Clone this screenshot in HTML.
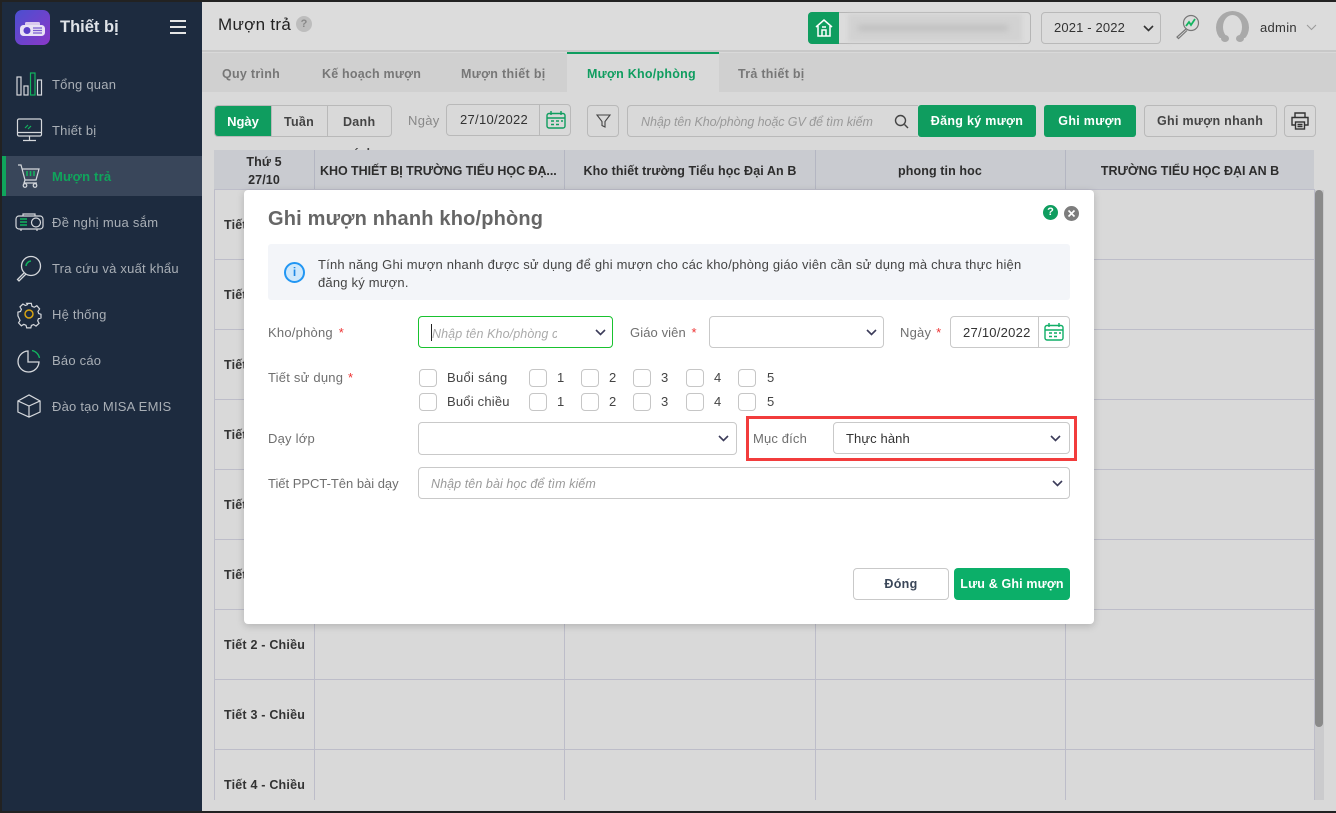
<!DOCTYPE html>
<html lang="vi"><head><meta charset="utf-8"><title>Mượn trả</title>
<style>
*{box-sizing:border-box}
html,body{margin:0;padding:0}
body{width:1336px;height:813px;overflow:hidden;position:relative;background:#d9d9d9;font-family:"Liberation Sans","DejaVu Sans",sans-serif;font-size:13px;color:#333}
.a{position:absolute}
.t{position:absolute;white-space:nowrap;line-height:20px;letter-spacing:.3px;margin-top:1px}
.n{margin-top:0}
.box{position:absolute;border:1px solid #b9b9b9;border-radius:4px}
.inp{position:absolute;border:1px solid #c9c9c9;border-radius:4px;background:#fff;height:32px}
.cb{position:absolute;width:18px;height:18px;border:1px solid #c6c6c6;border-radius:4px;background:#fff}
.g{position:absolute;background:#0f9d5f;color:#fff;border-radius:3px;text-align:center;font-weight:bold;letter-spacing:.3px;height:32px;line-height:32px}
.m{color:#a9afb6;left:52px;letter-spacing:.22px}
.lab{color:#6f6f6f;letter-spacing:.22px}
.st{color:#e33;margin-left:1px}
.hl{position:absolute;left:214px;width:1101px;height:1px;background:#bdbdc9}
.vl{position:absolute;top:189px;height:611px;width:1px;background:#bdbdc9}
.th{position:absolute;top:161px;text-align:center;font-weight:bold;color:#2d2d2d;line-height:20px;white-space:nowrap;font-size:12.5px;letter-spacing:.1px}
.rw{position:absolute;left:224px;font-weight:bold;color:#333;line-height:20px;white-space:nowrap;font-size:12.5px;letter-spacing:.2px}
.tb{font-weight:bold;color:#777;font-size:12.5px;letter-spacing:.28px}
.ck{color:#444}
svg{position:absolute;overflow:visible}
</style></head><body>

<!-- main header -->
<div class="a" style="left:202px;top:0;width:1134px;height:52px;background:#dcdcdc;border-bottom:2px solid #c8c8c8"></div>
<div class="t n" style="left:218px;top:14px;font-size:17px;line-height:22px;color:#222;letter-spacing:.3px">Mượn trả</div>
<div class="a" style="left:296px;top:16px;width:16px;height:16px;border-radius:50%;background:#bdbdbd;color:#888;text-align:center;font-size:11px;line-height:16px;font-weight:bold">?</div>

<div class="box" style="left:808px;top:12px;width:223px;height:32px;border-color:#b5b5b5"></div>
<div class="a" style="left:808px;top:12px;width:31px;height:32px;background:#0f9d5f;border-radius:4px 0 0 4px"></div>
<svg style="left:815px;top:18px" width="18" height="20" viewBox="0 0 18 20" fill="none" stroke="#fff" stroke-width="1.5"><path d="M1 9 9 2l8 7M3 8v10h12V8M7 18v-6h4v6M7 9h4"/></svg>
<div class="a" style="left:848px;top:14px;width:174px;height:28px;background:#d2d2d2;filter:blur(2px)"></div>
<div class="a" style="left:858px;top:25px;width:150px;height:6px;background:#c0c0c0;filter:blur(3px)"></div>

<div class="box" style="left:1041px;top:12px;width:120px;height:32px"></div>
<div class="t n" style="left:1054px;top:18px;color:#333;letter-spacing:.15px">2021 - 2022</div>
<svg style="left:1143px;top:25px" width="11" height="7" viewBox="0 0 11 7" fill="none" stroke="#333" stroke-width="1.6"><path d="M1 1l4.5 4.5L10 1"/></svg>
<svg style="left:1174px;top:14px" width="26" height="26" viewBox="0 0 26 26" fill="none"><circle cx="17" cy="9" r="7.5" stroke="#777" stroke-width="1.2"/><path d="M12 15 3 23l1.500 1.500 8.500-8" stroke="#777" stroke-width="1.2"/><path d="M12 12l3-4 2 3 4-6" stroke="#12b45f" stroke-width="1.8"/></svg>
<div class="a" style="left:1216px;top:11px;width:33px;height:33px;border-radius:50%;background:#a9a9a9"></div>
<div class="a" style="left:1223px;top:15px;width:19px;height:24px;border-radius:50%;background:#dcdcdc"></div>
<div class="a" style="left:1216px;top:38px;width:33px;height:6px;background:#dcdcdc"></div>
<div class="a" style="left:1221px;top:35px;width:8px;height:7px;border-radius:50%;background:#a9a9a9"></div>
<div class="a" style="left:1236px;top:35px;width:8px;height:7px;border-radius:50%;background:#a9a9a9"></div>
<div class="t n" style="left:1260px;top:18px;color:#333">admin</div>
<svg style="left:1306px;top:24px" width="11" height="7" viewBox="0 0 11 7" fill="none" stroke="#999" stroke-width="1"><path d="M1 1l4.500 4.500L10 1"/></svg>

<!-- tabs -->
<div class="a" style="left:202px;top:53px;width:1134px;height:39px;background:#d0d0d0"></div>
<div class="a" style="left:567px;top:52px;width:152px;height:40px;background:#d9d9d9;border-top:2px solid #0f9d5f"></div>
<div class="t tb" style="left:222px;top:63px">Quy trình</div>
<div class="t tb" style="left:322px;top:63px;letter-spacing:.2px">Kế hoạch mượn</div>
<div class="t tb" style="left:461px;top:63px;letter-spacing:.32px">Mượn thiết bị</div>
<div class="t tb" style="left:587px;top:63px;color:#0f9d5f;letter-spacing:.25px">Mượn Kho/phòng</div>
<div class="t tb" style="left:738px;top:63px">Trả thiết bị</div>

<!-- toolbar -->
<div class="box" style="left:214px;top:105px;width:178px;height:32px"></div>
<div class="a" style="left:215px;top:106px;width:56px;height:30px;background:#0f9d5f;border-radius:3px 0 0 3px;color:#fff;font-weight:bold;text-align:center;line-height:31px">Ngày</div>
<div class="a" style="left:327px;top:106px;width:1px;height:30px;background:#b9b9b9"></div>
<div class="a" style="left:271px;top:106px;width:1px;height:30px;background:#b9b9b9"></div>
<div class="t tb" style="left:284px;top:111px;color:#444">Tuần</div>
<div class="t tb" style="left:343px;top:111px;color:#444">Danh</div>
<div class="t" style="left:408px;top:110px;color:#888">Ngày</div>
<div class="box" style="left:446px;top:104px;width:125px;height:32px"></div>
<div class="a" style="left:539px;top:105px;width:1px;height:30px;background:#b9b9b9"></div>
<div class="t n" style="left:460px;top:110px;color:#333">27/10/2022</div>
<svg style="left:546px;top:111px" width="20" height="18" viewBox="0 0 20 18" fill="none" stroke="#0f9d5f" stroke-width="1.400"><rect x="1" y="2.500" width="18" height="14.500" rx="2"/><path d="M1 7h18M5 0v4M15 0v4M5 10h3M10 10h3M15 10h2M5 13.500h3M10 13.500h3"/></svg>
<div class="box" style="left:587px;top:105px;width:32px;height:32px"></div>
<svg style="left:596px;top:114px" width="15" height="15" viewBox="0 0 15 15" fill="none" stroke="#444" stroke-width="1.100"><path d="M1 1h13L9 7.500V13l-3-1.500v-4z"/></svg>
<div class="box" style="left:627px;top:105px;width:291px;height:32px;border-radius:4px 0 0 4px;border-right:0"></div>
<div class="t" style="left:641px;top:111px;color:#999;font-style:italic;font-size:12.500px;letter-spacing:-.08px">Nhập tên Kho/phòng hoặc GV để tìm kiếm</div>
<svg style="left:894px;top:114px" width="15" height="15" viewBox="0 0 15 15" fill="none" stroke="#444" stroke-width="1.400"><circle cx="6.500" cy="6.500" r="5"/><path d="M10.500 10.500 14 14"/></svg>
<div class="g" style="left:918px;top:105px;width:118px;font-size:12.500px">Đăng ký mượn</div>
<div class="g" style="left:1044px;top:105px;width:92px;font-size:12.500px">Ghi mượn</div>
<div class="box" style="left:1144px;top:105px;width:133px;height:32px"></div>
<div class="t tb" style="left:1157px;top:110px;color:#444;letter-spacing:.3px">Ghi mượn nhanh</div>
<div class="box" style="left:1284px;top:105px;width:32px;height:32px"></div>
<svg style="left:1291px;top:112px" width="18" height="18" viewBox="0 0 18 18" fill="none" stroke="#333" stroke-width="1.400"><path d="M4 5V1h10v4M4 13H1V5.500h16V13h-3"/><rect x="4.500" y="10" width="9" height="7"/><path d="M6.500 12.500h5M6.500 14.500h5"/></svg>

<!-- table -->
<div class="t n" style="left:346px;top:145px;height:5px;overflow:hidden;font-weight:bold;font-size:12px;color:#444;letter-spacing:.2px;line-height:16px;">sách</div>
<div class="a" style="left:214px;top:150px;width:1100px;height:39px;background:#c9cbd0"></div>
<div class="a" style="left:214px;top:189px;width:1101px;height:1px;background:#bdbdc9"></div>
<div class="a" style="left:314px;top:150px;width:1px;height:39px;background:#b4b6c2"></div>
<div class="a" style="left:564px;top:150px;width:1px;height:39px;background:#b4b6c2"></div>
<div class="a" style="left:815px;top:150px;width:1px;height:39px;background:#b4b6c2"></div>
<div class="a" style="left:1065px;top:150px;width:1px;height:39px;background:#b4b6c2"></div>
<div class="th" style="left:214px;width:100px;top:153px;line-height:18px;font-size:12.500px">Thứ 5<br>27/10</div>
<div class="th" style="left:320px;letter-spacing:-.05px">KHO THIẾT BỊ TRƯỜNG TIỂU HỌC ĐẠ...</div>
<div class="th" style="left:565px;width:250px">Kho thiết trường Tiểu học Đại An B</div>
<div class="th" style="left:815px;width:250px">phong tin hoc</div>
<div class="th" style="left:1065px;width:250px;letter-spacing:0">TRƯỜNG TIỂU HỌC ĐẠI AN B</div>

<div class="hl" style="top:259px"></div><div class="hl" style="top:329px"></div><div class="hl" style="top:399px"></div><div class="hl" style="top:469px"></div><div class="hl" style="top:539px"></div><div class="hl" style="top:609px"></div><div class="hl" style="top:679px"></div><div class="hl" style="top:749px"></div>
<div class="vl" style="left:214px"></div><div class="vl" style="left:314px"></div><div class="vl" style="left:564px"></div><div class="vl" style="left:815px"></div><div class="vl" style="left:1065px"></div><div class="vl" style="left:1314px"></div>

<div class="rw" style="top:215px">Tiết</div>
<div class="rw" style="top:285px">Tiết</div>
<div class="rw" style="top:355px">Tiết</div>
<div class="rw" style="top:425px">Tiết</div>
<div class="rw" style="top:495px">Tiết</div>
<div class="rw" style="top:565px">Tiết</div>
<div class="rw" style="top:635px">Tiết 2 - Chiều</div>
<div class="rw" style="top:705px">Tiết 3 - Chiều</div>
<div class="rw" style="top:775px">Tiết 4 - Chiều</div>

<div class="a" style="left:1315px;top:190px;width:9px;height:610px;background:#cbcbcd"></div>
<div class="a" style="left:1315px;top:190px;width:8px;height:537px;background:#8a8a8a;border-radius:4px"></div>

<!-- sidebar -->
<div class="a" style="left:0;top:0;width:202px;height:813px;background:#1d2b3f"></div>
<div class="a" style="left:2px;top:156px;width:200px;height:40px;background:#39465a"></div>
<div class="a" style="left:2px;top:156px;width:4px;height:40px;background:#10a55c"></div>
<div class="a" style="left:15px;top:10px;width:35px;height:35px;border-radius:7px;background:linear-gradient(135deg,#4b4fd0,#8a38c8)"></div>
<svg style="left:19px;top:21px" width="27" height="16" viewBox="0 0 27 16"><rect x="6" y="1" width="15" height="4" rx="1.500" fill="#d9c9ee"/><rect x="1" y="4" width="25" height="11" rx="3.500" fill="#e8e2f5"/><circle cx="8" cy="9.500" r="3.500" fill="#5a3fc8"/><path d="M14 7h9M14 9.500h9M14 12h9" stroke="#7a5cd0" stroke-width="1.200"/></svg>
<div class="t n" style="left:60px;top:16px;font-size:16.500px;font-weight:bold;color:#dfe3e8;line-height:22px;letter-spacing:0">Thiết bị</div>
<div class="a" style="left:170px;top:20px;width:16px;height:2px;background:#e5e5e5"></div>
<div class="a" style="left:170px;top:26px;width:16px;height:2px;background:#e5e5e5"></div>
<div class="a" style="left:170px;top:32px;width:16px;height:2px;background:#e5e5e5"></div>

<svg style="left:16px;top:72px" width="27" height="24" viewBox="0 0 27 24" fill="none" stroke="#d5d8dc" stroke-width="1.200"><rect x="1" y="5" width="4" height="18"/><rect x="8" y="14" width="4" height="9"/><rect x="14.500" y="1" width="4.500" height="22" stroke="#12b45f"/><rect x="21.500" y="8" width="4" height="15"/></svg>
<div class="t m" style="top:74px">Tổng quan</div>

<svg style="left:16px;top:118px" width="27" height="24" viewBox="0 0 27 24" fill="none" stroke="#d5d8dc" stroke-width="1.200"><rect x="1.500" y="1" width="24" height="17" rx="1.500"/><path d="M1.500 14.500h24M13.500 18v4M7 22.500h13"/><path d="M9 10l3-3M12 11l3-3" stroke="#12b45f"/></svg>
<div class="t m" style="top:120px">Thiết bị</div>

<svg style="left:17px;top:164px" width="24" height="24" viewBox="0 0 24 24" fill="none" stroke="#d5d8dc" stroke-width="1.200"><path d="M1 1h3l4 15h11l3-11H5M8 16l-1 3h13"/><circle cx="8" cy="21.500" r="1.800"/><circle cx="18" cy="21.500" r="1.800"/><path d="M10 7v5M13.500 7v5M17 7v5" stroke="#12b45f" stroke-width="1.500"/></svg>
<div class="t" style="left:52px;top:166px;color:#10a55c;font-weight:bold;letter-spacing:.2px">Mượn trả</div>

<svg style="left:15px;top:213px" width="29" height="20" viewBox="0 0 29 20" fill="none" stroke="#d5d8dc" stroke-width="1.200"><rect x="1" y="3" width="27" height="13" rx="3"/><path d="M8 3V1h12v2M6 16v2M22 16v2"/><circle cx="21" cy="9.500" r="4.500"/><path d="M5 6h7M5 9h7M5 12h7" stroke="#12b45f" stroke-width="1.600"/></svg>
<div class="t m" style="top:212px;letter-spacing:.3px">Đề nghị mua sắm</div>

<svg style="left:17px;top:255px" width="25" height="27" viewBox="0 0 25 27" fill="none" stroke="#d5d8dc" stroke-width="1.300"><circle cx="14" cy="11" r="9.500"/><path d="M7 18 0.500 24.500 2 26l7-7"/><path d="M9 11a5.500 5.500 0 0 1 5-5" stroke="#12b45f" stroke-width="1.500"/></svg>
<div class="t m" style="top:258px">Tra cứu và xuất khẩu</div>

<svg style="left:17px;top:302px" width="24" height="24" viewBox="0 0 26 26" fill="none" stroke="#d5d8dc" stroke-width="1.300"><path d="M10.500 1.500h5l.7 3.200 2.500 1 2.800-1.700 3 3.500-1.800 2.700.8 2.300 2.500.8v4l-2.800.8-.8 2.300 1.500 2.700-3.300 3-2.600-1.700-2.400 1-.6 2.600h-4.500l-.7-2.800-2.400-1-2.700 1.600-3-3.200 1.600-2.600-1-2.300L1 15v-4l2.800-.7 1-2.400-1.600-2.600 3.200-3.100 2.700 1.600 2.300-1z"/><circle cx="13" cy="13" r="4.300" stroke="#d9a513" stroke-width="1.600"/></svg>
<div class="t m" style="top:304px">Hệ thống</div>

<svg style="left:17px;top:349px" width="24" height="24" viewBox="0 0 24 24" fill="none" stroke="#d5d8dc" stroke-width="1.300"><path d="M11 2a10.500 10.500 0 1 0 11 11H11z"/><path d="M15 1.500A9.500 9.500 0 0 1 22.500 9" stroke="#12b45f" stroke-width="1.300"/></svg>
<div class="t m" style="top:350px">Báo cáo</div>

<svg style="left:17px;top:394px" width="24" height="24" viewBox="0 0 26 26" fill="none" stroke="#d5d8dc" stroke-width="1.300"><path d="M13 1 25 7.500v12L13 25 1 19.500v-12zM1 7.500 13 13l12-5.500M13 13v12"/></svg>
<div class="t m" style="top:396px">Đào tạo MISA EMIS</div>

<!-- outer frame -->
<div class="a" style="left:0;top:0;width:1336px;height:2px;background:#222"></div>
<div class="a" style="left:0;top:0;width:2px;height:813px;background:#222"></div>
<div class="a" style="left:0;top:811px;width:1336px;height:2px;background:#222"></div>

<!-- modal -->
<div class="a" style="left:244px;top:190px;width:850px;height:434px;background:#fff;border-radius:4px;box-shadow:0 2px 8px rgba(0,0,0,.18)"></div>
<div class="t n" style="left:268px;top:204px;font-size:20px;font-weight:bold;color:#666;line-height:28px;letter-spacing:.18px;margin-top:-1px;padding-top:2px">Ghi mượn nhanh kho/phòng</div>
<div class="a" style="left:1043px;top:205px;width:15px;height:15px;border-radius:50%;background:#0f9d5f;color:#fff;font-weight:bold;font-size:11px;line-height:15px;text-align:center">?</div>
<div class="a" style="left:1064px;top:206px;width:15px;height:15px;border-radius:50%;background:#7d7d7d"></div>
<svg style="left:1064px;top:206px" width="15" height="15" viewBox="0 0 15 15" stroke="#fff" stroke-width="1.600"><path d="M4.500 4.500l6 6M10.500 4.500l-6 6"/></svg>

<div class="a" style="left:268px;top:244px;width:802px;height:56px;background:#f3f5f9;border-radius:3px"></div>
<div class="a" style="left:284px;top:262px;width:21px;height:21px;border-radius:50%;background:#cfe8fb;border:2px solid #2196f3;color:#1e88e5;text-align:center;font-weight:bold;font-size:12px;line-height:17px">i</div>
<div class="t" style="left:318px;top:254px;color:#444;letter-spacing:.2px">Tính năng Ghi mượn nhanh được sử dụng để ghi mượn cho các kho/phòng giáo viên cần sử dụng mà chưa thực hiện</div>
<div class="t" style="left:318px;top:272px;color:#444;letter-spacing:.2px">đăng ký mượn.</div>

<div class="t lab" style="left:268px;top:322px">Kho/phòng <span class="st" style="margin-left:2px">*</span></div>
<div class="inp" style="left:418px;top:316px;width:195px;border-color:#19c22f"></div>
<div class="a" style="left:431px;top:324px;width:1px;height:17px;background:#222"></div>
<div class="t" style="left:432px;top:323px;width:125px;overflow:hidden;color:#aaa;font-style:italic;letter-spacing:.1px;font-size:12.500px">Nhập tên Kho/phòng cần mượn</div>
<svg style="left:595px;top:329px" width="11" height="7" viewBox="0 0 11 7" fill="none" stroke="#3c3c5a" stroke-width="1.600"><path d="M1 1l4.500 4.500L10 1"/></svg>

<div class="t lab" style="left:630px;top:322px;letter-spacing:.1px">Giáo viên <span class="st" style="margin-left:2px">*</span></div>
<div class="inp" style="left:709px;top:316px;width:175px"></div>
<svg style="left:866px;top:329px" width="11" height="7" viewBox="0 0 11 7" fill="none" stroke="#3c3c5a" stroke-width="1.600"><path d="M1 1l4.500 4.500L10 1"/></svg>

<div class="t lab" style="left:900px;top:322px">Ngày <span class="st">*</span></div>
<div class="inp" style="left:950px;top:316px;width:120px"></div>
<div class="a" style="left:1038px;top:317px;width:1px;height:30px;background:#c9c9c9"></div>
<div class="t n" style="left:963px;top:323px;color:#333;letter-spacing:.25px">27/10/2022</div>
<svg style="left:1044px;top:323px" width="20" height="18" viewBox="0 0 20 18" fill="none" stroke="#0fae66" stroke-width="1.400"><rect x="1" y="2.500" width="18" height="14.500" rx="2"/><path d="M1 7h18M5 0v4M15 0v4M5 10h3M10 10h3M15 10h2M5 13.500h3M10 13.500h3"/></svg>

<div class="t lab" style="left:268px;top:367px">Tiết sử dụng <span class="st">*</span></div>
<div class="cb" style="left:419px;top:369px"></div><div class="t n ck" style="left:447px;top:368px">Buổi sáng</div>
<div class="cb" style="left:529px;top:369px"></div><div class="t n ck" style="left:557px;top:368px">1</div>
<div class="cb" style="left:581px;top:369px"></div><div class="t n ck" style="left:609px;top:368px">2</div>
<div class="cb" style="left:633px;top:369px"></div><div class="t n ck" style="left:661px;top:368px">3</div>
<div class="cb" style="left:686px;top:369px"></div><div class="t n ck" style="left:714px;top:368px">4</div>
<div class="cb" style="left:738px;top:369px"></div><div class="t n ck" style="left:767px;top:368px">5</div>
<div class="cb" style="left:419px;top:393px"></div><div class="t n ck" style="left:447px;top:392px;letter-spacing:.2px">Buổi chiều</div>
<div class="cb" style="left:529px;top:393px"></div><div class="t n ck" style="left:557px;top:392px">1</div>
<div class="cb" style="left:581px;top:393px"></div><div class="t n ck" style="left:609px;top:392px">2</div>
<div class="cb" style="left:633px;top:393px"></div><div class="t n ck" style="left:661px;top:392px">3</div>
<div class="cb" style="left:686px;top:393px"></div><div class="t n ck" style="left:714px;top:392px">4</div>
<div class="cb" style="left:738px;top:393px"></div><div class="t n ck" style="left:767px;top:392px">5</div>

<div class="t lab" style="left:268px;top:428px">Dạy lớp</div>
<div class="inp" style="left:418px;top:422px;width:319px;height:33px"></div>
<svg style="left:718px;top:435px" width="11" height="7" viewBox="0 0 11 7" fill="none" stroke="#3c3c5a" stroke-width="1.600"><path d="M1 1l4.500 4.500L10 1"/></svg>

<div class="a" style="left:746px;top:416px;width:331px;height:45px;border:3px solid #f23c3c"></div>
<div class="t lab" style="left:753px;top:428px;letter-spacing:.15px">Mục đích</div>
<div class="inp" style="left:833px;top:422px;width:237px"></div>
<div class="t" style="left:846px;top:428px;color:#333;letter-spacing:.1px">Thực hành</div>
<svg style="left:1050px;top:435px" width="11" height="7" viewBox="0 0 11 7" fill="none" stroke="#3c3c5a" stroke-width="1.600"><path d="M1 1l4.500 4.500L10 1"/></svg>

<div class="t lab" style="left:268px;top:473px;letter-spacing:-.02px">Tiết PPCT-Tên bài dạy</div>
<div class="inp" style="left:418px;top:467px;width:652px"></div>
<div class="t" style="left:431px;top:473px;color:#999;font-style:italic;font-size:12.500px;letter-spacing:.08px">Nhập tên bài học để tìm kiếm</div>
<svg style="left:1052px;top:480px" width="11" height="7" viewBox="0 0 11 7" fill="none" stroke="#3c3c5a" stroke-width="1.600"><path d="M1 1l4.500 4.500L10 1"/></svg>

<div class="a" style="left:853px;top:568px;width:96px;height:32px;border:1px solid #c9c9c9;border-radius:4px;background:#fff;text-align:center;line-height:31px;color:#3a4658;font-weight:bold;font-size:12.500px;letter-spacing:.3px">Đóng</div>
<div class="a" style="left:954px;top:568px;width:116px;height:32px;background:#0caf69;border-radius:4px;color:#fff;text-align:center;line-height:32px;font-weight:bold;font-size:12.500px;letter-spacing:.15px;white-space:nowrap">Lưu &amp; Ghi mượn</div>

</body></html>
